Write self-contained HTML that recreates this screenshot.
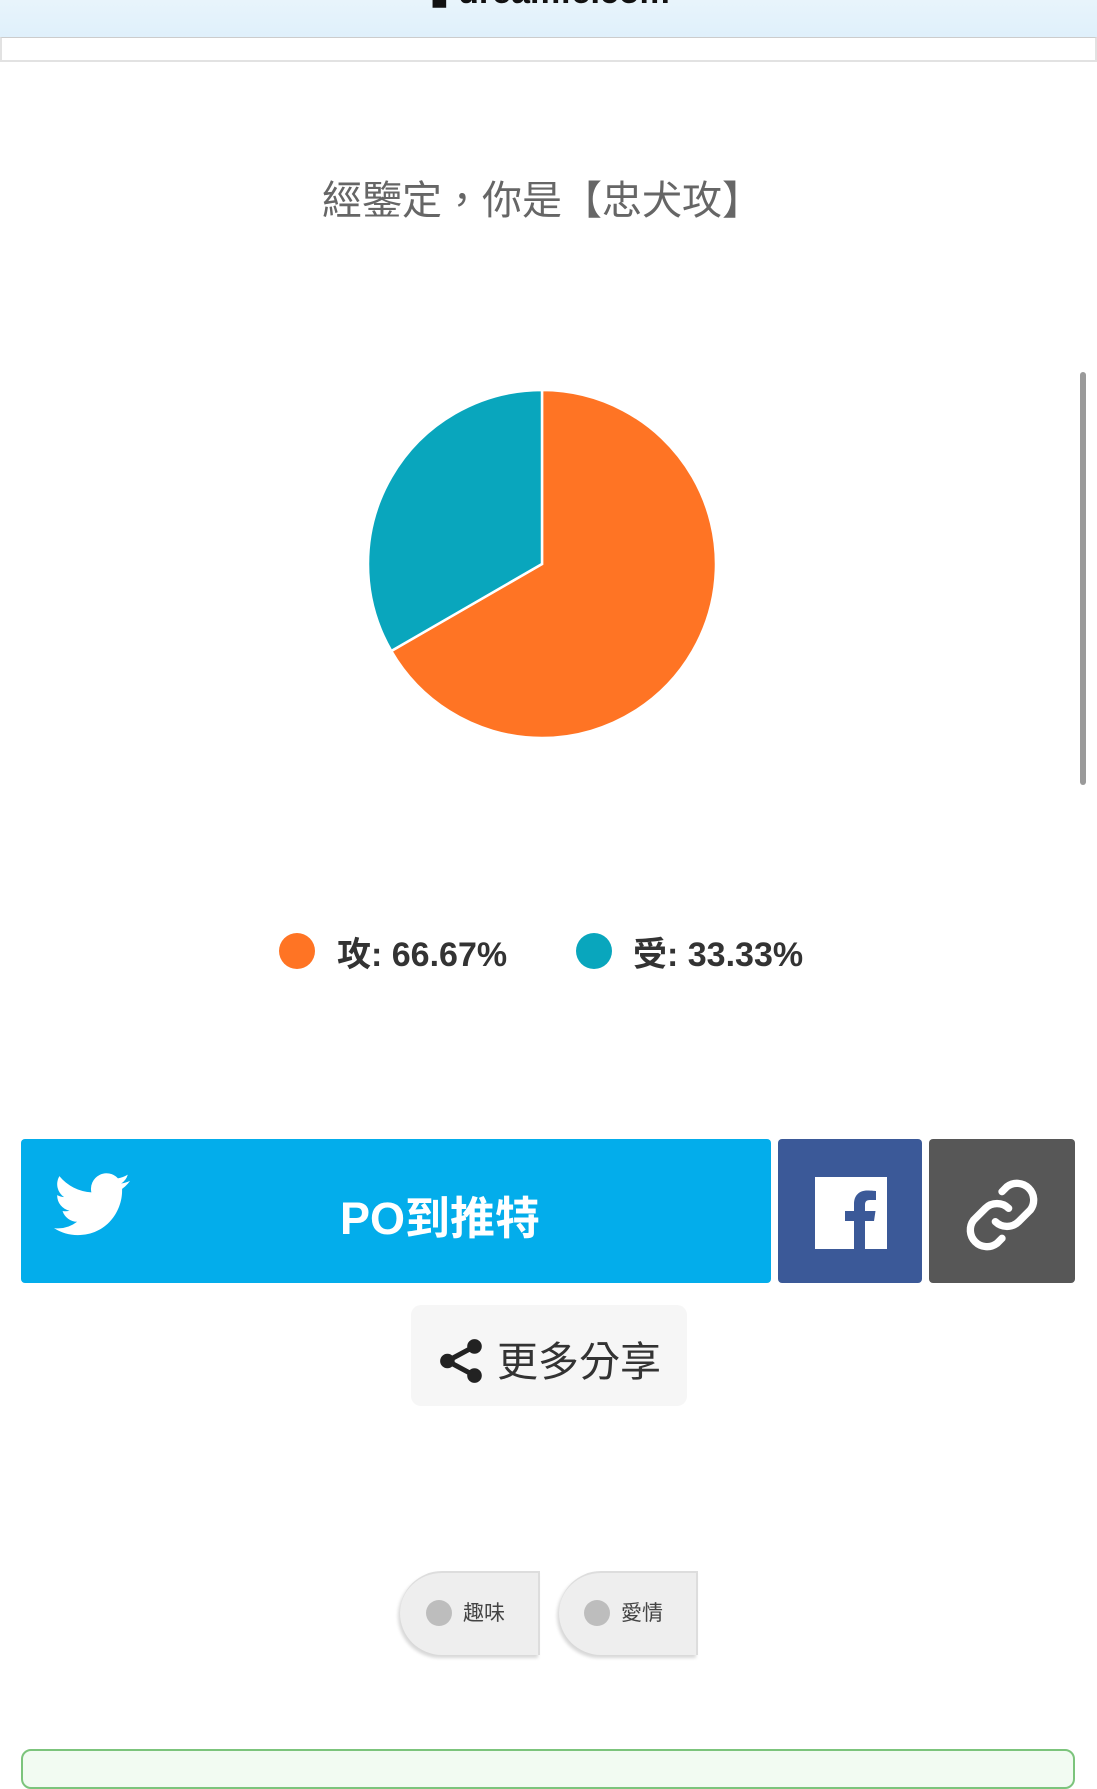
<!DOCTYPE html>
<html><head><meta charset="utf-8"><style>
*{margin:0;padding:0;box-sizing:border-box}
body{width:1097px;height:1758px;overflow:hidden;background:#fff;position:relative;font-family:"Liberation Sans","Noto Sans CJK TC",sans-serif}
.a{position:absolute}
</style></head><body>
<div class="a" style="left:0;top:0;width:1097px;height:38px;background:linear-gradient(#e8f4fb,#dff0fb)"></div>
<div class="a" style="left:430px;top:-28px;font-size:34px;font-weight:bold;color:#111">▮ dreamfe.com</div>
<div class="a" style="left:0;top:37px;width:1097px;height:25px;border:2px solid #e2e2e2;border-top:1px solid #ccc;background:#fff"></div>
<div class="a" style="left:0;top:168px;width:1084px;text-align:center;font-size:40px;color:#666;font-family:'Noto Sans CJK TC',sans-serif">經鑒定，你是【忠犬攻】</div>
<svg class="a" style="left:366px;top:388px" width="352" height="352" viewBox="-176 -176 352 352">
<path d="M0 0 L0 -174 A174 174 0 1 1 -150.7 87 Z" fill="#FF7424" stroke="#fff" stroke-width="2.5"/>
<path d="M0 0 L-150.7 87 A174 174 0 0 1 0 -174 Z" fill="#09A6BD" stroke="#fff" stroke-width="2.5"/>
</svg>
<div class="a" style="left:1080px;top:372px;width:6px;height:413px;border-radius:3px;background:#9a9a9a"></div>
<div class="a" style="left:279px;top:933px;width:36px;height:36px;border-radius:50%;background:#FF7424"></div>
<div class="a" style="left:337px;top:927px;font-size:34px;font-weight:bold;color:#333">攻: 66.67%</div>
<div class="a" style="left:576px;top:933px;width:36px;height:36px;border-radius:50%;background:#09A6BD"></div>
<div class="a" style="left:633px;top:927px;font-size:34px;font-weight:bold;color:#333">受: 33.33%</div>
<div class="a" style="left:21px;top:1139px;width:750px;height:144px;background:#03ADEB;border-radius:4px"></div>
<svg class="a" style="left:54px;top:1172px" width="76" height="66" viewBox="0 0 24 20"><path fill="#fff" d="M24 2.4a9.8 9.8 0 0 1-2.8.8A4.9 4.9 0 0 0 23.3.4a9.9 9.9 0 0 1-3.1 1.2A4.9 4.9 0 0 0 11.8 6 14 14 0 0 1 1.7.9a4.9 4.9 0 0 0 1.5 6.6 4.9 4.9 0 0 1-2.2-.6v.1a4.9 4.9 0 0 0 3.9 4.8 4.9 4.9 0 0 1-2.2.1 4.9 4.9 0 0 0 4.6 3.4A9.9 9.9 0 0 1 0 17.3 14 14 0 0 0 7.5 19.5c9.1 0 14-7.5 14-14v-.6A10 10 0 0 0 24 2.4z"/></svg>
<div class="a" style="left:290px;top:1182px;width:300px;text-align:center;font-size:45px;font-weight:bold;color:#fff">PO到推特</div>
<div class="a" style="left:778px;top:1139px;width:144px;height:144px;background:#3B5998;border-radius:4px"></div>
<svg class="a" style="left:815px;top:1177px" width="72" height="72" viewBox="0 0 72 72"><rect width="72" height="72" fill="#fff"/><path d="M50 72V44h9l1.5-10H50v-6c0-3 1-5 5-5h6v-9c-1 0-4.5-.5-8.5-.5C44 13.5 39 18.5 39 27v7h-9v10h9v28z" fill="#3B5998"/></svg>
<div class="a" style="left:929px;top:1139px;width:146px;height:144px;background:#575757;border-radius:4px"></div>
<svg class="a" style="left:962px;top:1175px" width="80" height="80" viewBox="0 0 24 24" fill="none" stroke="#fff" stroke-width="2.2" stroke-linecap="round"><path d="M10 14a5 5 0 0 0 7 0l3.5-3.5a5 5 0 0 0-7-7L12 5"/><path d="M14 10a5 5 0 0 0-7 0l-3.5 3.5a5 5 0 0 0 7 7L12 19"/></svg>
<div class="a" style="left:411px;top:1305px;width:276px;height:101px;background:#f6f6f6;border-radius:10px"></div>
<svg class="a" style="left:437px;top:1336px" width="50" height="50" viewBox="0 0 24 24" fill="#222"><circle cx="18" cy="5" r="3.5"/><circle cx="5" cy="12" r="3.5"/><circle cx="18" cy="19" r="3.5"/><path d="M5 12L18 5M5 12l13 7" stroke="#222" stroke-width="2.4"/></svg>
<div class="a" style="left:497px;top:1328px;font-size:41px;color:#333;font-family:'Noto Sans CJK TC',sans-serif">更多分享</div>
<div class="a" style="left:400px;top:1571px;width:140px;height:84px;background:#eee;border-radius:42px 0 0 42px;border-top:2px solid #ddd;border-right:2px solid #ddd;box-shadow:-2px 3px 3px #d8d8d8"></div>
<div class="a" style="left:426px;top:1600px;width:26px;height:26px;border-radius:50%;background:#bdbdbd"></div>
<div class="a" style="left:463px;top:1597px;font-size:21px;color:#444">趣味</div>
<div class="a" style="left:559px;top:1571px;width:139px;height:84px;background:#eee;border-radius:42px 0 0 42px;border-top:2px solid #ddd;border-right:2px solid #ddd;box-shadow:-2px 3px 3px #d8d8d8"></div>
<div class="a" style="left:584px;top:1600px;width:26px;height:26px;border-radius:50%;background:#bdbdbd"></div>
<div class="a" style="left:621px;top:1597px;font-size:21px;color:#444">愛情</div>
<div class="a" style="left:21px;top:1749px;width:1054px;height:40px;border:2px solid #7cc47c;border-radius:10px;background:#f2fbf2"></div>
</body></html>
